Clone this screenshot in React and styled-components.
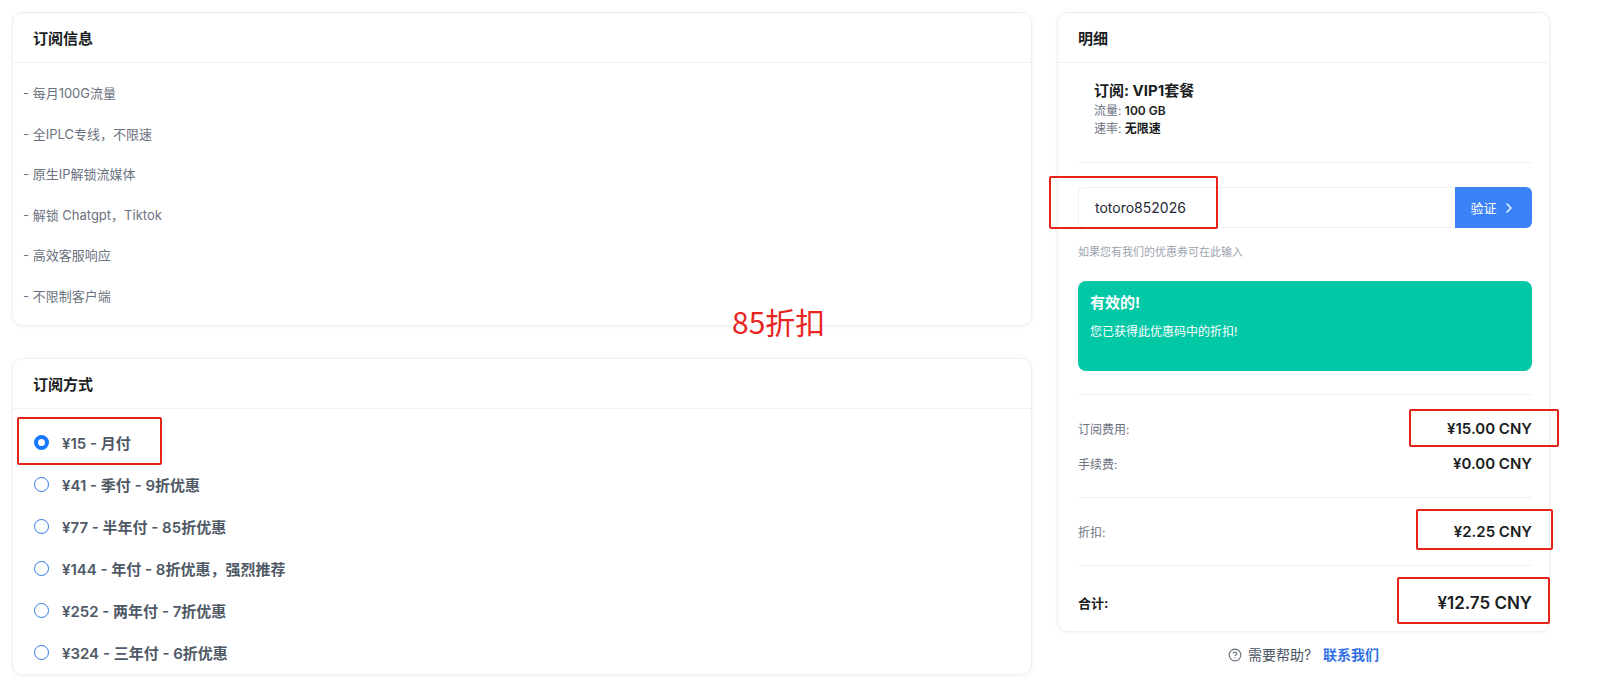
import React from 'react';
import styled, { createGlobalStyle } from 'styled-components';
import { ChevronRight, CircleHelp } from 'lucide-react';

const GlobalStyle = createGlobalStyle`
  html, body {
    margin: 0;
    padding: 0;
    background: #ffffff;
    font-family: Inter, "Noto Sans CJK SC", sans-serif;
    color: #1f2937;
  }
  * { box-sizing: border-box; }
`;

const Page = styled.div`
  position: relative;
  display: flex;
  align-items: flex-start;
  gap: 25px;
  padding: 12px 0 0 12px;
  height: 679px;
  overflow: hidden;
`;

const LeftCol = styled.div`
  width: 1020px;
  display: flex;
  flex-direction: column;
  gap: 32px;
`;

const RightCol = styled.div`
  width: 493px;
  display: flex;
  flex-direction: column;
`;

const Card = styled.div`
  background: #fff;
  border: 1px solid #eef0f3;
  border-radius: 10px;
  box-shadow: 0 1px 4px rgba(15, 23, 42, 0.05);
`;

const CardHeader = styled.div`
  height: 50px;
  display: flex;
  align-items: center;
  padding: 0 20px;
  border-bottom: 1px solid #eef0f2;
  font-size: 15px;
  font-weight: 700;
  color: #1a1d21;
`;

const FeatureList = styled.div`
  padding: 10px 10px 8px;
`;

const Feature = styled.div`
  line-height: 40.6px;
  font-size: 13px;
  color: #6b7280;
`;

const PlanList = styled.div`
  padding: 13px 21px 0;
`;

const PlanRow = styled.label`
  position: relative;
  height: 42px;
  display: flex;
  align-items: center;
  gap: 13px;
  font-size: 15px;
  font-weight: 600;
  color: #4f5966;
`;

const Radio = styled.span`
  width: 15px;
  height: 15px;
  border-radius: 50%;
  border: ${p => (p.checked ? '4px solid #1677ff' : '1.5px solid #2f7be6')};
  background: #fff;
  flex-shrink: 0;
`;

const Mark = styled.span`
  position: absolute;
  border: 2px solid #e5231b;
  border-radius: 2px;
  pointer-events: none;
`;

const RadioMark = styled(Mark)`
  left: -17px;
  top: -5px;
  width: 145px;
  height: 48px;
`;

const Section = styled.div`
  padding: ${p => p.pad || '16px 17px'};
  border-top: ${p => (p.first ? 'none' : '1px solid #eef0f2')};
`;

const Body = styled.div`
  padding: 0 17px 0 20px;
`;

const PlanTitle = styled.div`
  font-size: 15px;
  font-weight: 700;
  line-height: 22px;
  color: #1a1d21;
`;

const PlanMeta = styled.div`
  font-size: 12px;
  line-height: 18px;
  color: #6b7280;
  b {
    color: #1a1d21;
    font-weight: 600;
  }
`;

const InputGroup = styled.div`
  position: relative;
  display: flex;
  height: 41px;
`;

const CouponInput = styled.div`
  flex: 1;
  display: flex;
  align-items: center;
  padding: 0 16px;
  border: 1px solid #eef0f2;
  border-right: none;
  border-radius: 6px 0 0 6px;
  font-size: 14px;
  color: #1f2937;
`;

const VerifyButton = styled.button`
  width: 77px;
  border: none;
  background: #3b82f6;
  color: #fff;
  border-radius: 0 6px 6px 0;
  font-family: inherit;
  font-size: 13px;
  display: flex;
  align-items: center;
  justify-content: center;
  gap: 4px;
`;

const InputMark = styled(Mark)`
  left: -29px;
  top: -11px;
  width: 169px;
  height: 53px;
`;

const Hint = styled.div`
  margin-top: 16px;
  font-size: 11px;
  line-height: 16px;
  color: #9ca3af;
`;

const Alert = styled.div`
  margin-top: 21px;
  background: #03c8a6;
  border-radius: 8px;
  padding: 11px 12px 29px;
  color: #fff;
`;

const AlertTitle = styled.div`
  font-size: 15px;
  font-weight: 700;
  line-height: 22px;
`;

const AlertText = styled.div`
  margin-top: 8px;
  font-size: 12px;
  line-height: 20px;
`;

const PriceRow = styled.div`
  position: relative;
  height: 35px;
  display: flex;
  align-items: center;
  justify-content: space-between;
`;

const PriceLabel = styled.span`
  font-size: ${p => (p.strong ? '13px' : '12px')};
  font-weight: ${p => (p.strong ? 700 : 400)};
  color: ${p => (p.strong ? '#1a1d21' : '#6b7280')};
`;

const PriceValue = styled.span`
  font-size: ${p => (p.big ? '17px' : '15px')};
  font-weight: 600;
  color: #1a1d21;
`;

const ValueMark = styled(Mark)`
  right: ${p => p.r}px;
  top: ${p => p.t}px;
  width: ${p => p.w}px;
  height: ${p => p.h}px;
`;

const Help = styled.div`
  margin-top: 13px;
  display: flex;
  align-items: center;
  justify-content: center;
  gap: 6px;
  font-size: 14px;
  line-height: 20px;
  color: #4b5563;
  a {
    color: #2f6fe4;
    font-weight: 600;
    text-decoration: none;
    margin-left: 6px;
  }
`;

const Note = styled.div`
  position: absolute;
  left: 732px;
  top: 302px;
  font-family: "Noto Sans CJK SC", sans-serif;
  font-size: 30px;
  line-height: 38px;
  color: #e8251f;
`;

const features = [
  '- 每月100G流量',
  '- 全IPLC专线，不限速',
  '- 原生IP解锁流媒体',
  '- 解锁 Chatgpt，Tiktok',
  '- 高效客服响应',
  '- 不限制客户端',
];

const plans = [
  '¥15 - 月付',
  '¥41 - 季付 - 9折优惠',
  '¥77 - 半年付 - 85折优惠',
  '¥144 - 年付 - 8折优惠，强烈推荐',
  '¥252 - 两年付 - 7折优惠',
  '¥324 - 三年付 - 6折优惠',
];

const App = () => {
  return (
    <>
      <GlobalStyle />
      <Page>
        <LeftCol>
          <Card>
            <CardHeader>订阅信息</CardHeader>
            <FeatureList>
              {features.map(f => (
                <Feature key={f}>{f}</Feature>
              ))}
            </FeatureList>
          </Card>
          <Card>
            <CardHeader>订阅方式</CardHeader>
            <PlanList>
              {plans.map((p, i) => (
                <PlanRow key={p}>
                  <Radio checked={i === 0} />
                  {p}
                  {i === 0 && <RadioMark />}
                </PlanRow>
              ))}
            </PlanList>
          </Card>
        </LeftCol>

        <RightCol>
          <Card>
            <CardHeader>明细</CardHeader>
            <Body>
              <Section first pad="17px 16px 24px">
                <PlanTitle>订阅: VIP1套餐</PlanTitle>
                <PlanMeta>流量: <b>100 GB</b></PlanMeta>
                <PlanMeta>速率: <b>无限速</b></PlanMeta>
              </Section>
              <Section pad="24px 0 23px 0">
                <InputGroup>
                  <CouponInput>totoro852026</CouponInput>
                  <VerifyButton>
                    验证 <ChevronRight size={16} strokeWidth={2} />
                  </VerifyButton>
                  <InputMark />
                </InputGroup>
                <Hint>如果您有我们的优惠券可在此输入</Hint>
                <Alert>
                  <AlertTitle>有效的!</AlertTitle>
                  <AlertText>您已获得此优惠码中的折扣!</AlertText>
                </Alert>
              </Section>
              <Section pad="16px 0 16px 0">
                <PriceRow>
                  <PriceLabel>订阅费用:</PriceLabel>
                  <PriceValue>¥15.00 CNY</PriceValue>
                  <ValueMark r={-27} t={-2} w={150} h={38} />
                </PriceRow>
                <PriceRow>
                  <PriceLabel>手续费:</PriceLabel>
                  <PriceValue>¥0.00 CNY</PriceValue>
                </PriceRow>
              </Section>
              <Section pad="16px 0 16px 0">
                <PriceRow>
                  <PriceLabel>折扣:</PriceLabel>
                  <PriceValue>¥2.25 CNY</PriceValue>
                  <ValueMark r={-21} t={-5} w={137} h={41} />
                </PriceRow>
              </Section>
              <Section pad="19px 0 11px 0">
                <PriceRow>
                  <PriceLabel strong>合计:</PriceLabel>
                  <PriceValue big>¥12.75 CNY</PriceValue>
                  <ValueMark r={-18} t={-8} w={153} h={47} />
                </PriceRow>
              </Section>
            </Body>
          </Card>
          <Help>
            <CircleHelp size={14} color="#6b7280" />
            需要帮助?
            <a href="#">联系我们</a>
          </Help>
        </RightCol>
        <Note>85折扣</Note>
      </Page>
    </>
  );
};

export default App;
